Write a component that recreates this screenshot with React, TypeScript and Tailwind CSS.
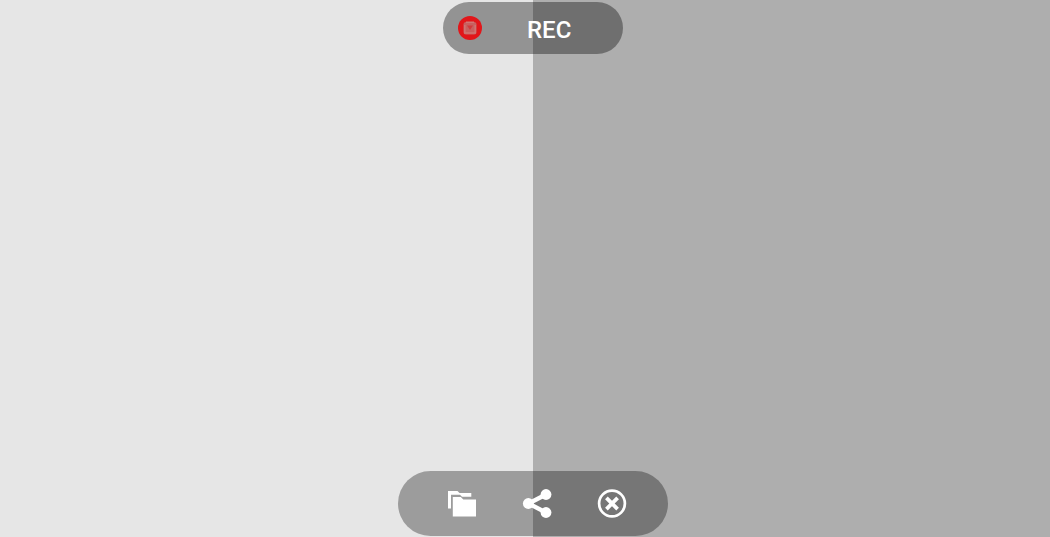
import type { ReactNode } from 'react';

function FoldersIcon() {
  return (
    <svg viewBox="0 0 30 30" className="size-[30px]" fill="currentColor" aria-hidden="true">
      <path d="M1 3h9.5l2 2H24.3v3.8H15l-2-2H4v13.6H1z" />
      <path d="M5.800 9h8l2.500 2.500H29V28.500H5.800z" />
    </svg>
  );
}

function ShareIcon() {
  return (
    <svg viewBox="0 0 30 30" className="size-[30px]" aria-hidden="true">
      <path d="M24 6.500 6.500 15.500 24 24.500" fill="none" stroke="currentColor" strokeWidth="4.300" />
      <g fill="currentColor">
        <circle cx="24" cy="6.500" r="5.400" />
        <circle cx="6.300" cy="15.500" r="5.400" />
        <circle cx="24" cy="24.500" r="5.400" />
      </g>
    </svg>
  );
}

function CloseIcon() {
  return (
    <svg viewBox="0 0 30 30" className="size-[30px]" fill="none" stroke="currentColor" aria-hidden="true">
      <circle cx="15" cy="15.500" r="12.900" strokeWidth="2.700" />
      <path d="m9.400 9.900 11.200 11.200m0-11.200-11.200 11.200" strokeWidth="3.800" />
    </svg>
  );
}

function RecordIcon() {
  return (
    <svg viewBox="0 0 24 24" className="size-6" aria-hidden="true">
      <circle cx="12" cy="12" r="12" fill="#e2161a" />
      <rect x="5.500" y="6" width="13" height="12.500" rx="2.500" fill="#c8605f" />
      <path d="M8 6.200h8M6.800 9v8h10.400V9" fill="none" stroke="#cf7673" strokeWidth="1.500" />
      <path d="M9 9.500h6l-3 4.500z" fill="#d03a3c" />
    </svg>
  );
}

function ToolButton({ label, children }: { label: string; children: ReactNode }) {
  return (
    <button type="button" aria-label={label} className="shrink-0 cursor-pointer">
      {children}
    </button>
  );
}

export default function App() {
  return (
    <main className="relative flex h-screen overflow-hidden font-['Roboto',sans-serif] text-white">
      <div className="w-[50.76%] bg-[#e6e6e6]" />
      <div className="flex-1 bg-[#aeaeae]" />

      <button
        type="button"
        className="absolute top-0.5 left-[50.76%] flex h-[52px] w-[180px] -translate-x-1/2 cursor-pointer items-center gap-[45px] rounded-full bg-black/36 pl-[15px]"
      >
        <RecordIcon />
        <span className="pt-[3px] text-[24px] leading-7 font-medium">REC</span>
      </button>

      <div
        role="toolbar"
        aria-label="Capture actions"
        className="absolute bottom-px left-[50.76%] flex h-[65px] w-[270px] -translate-x-1/2 items-center gap-[45px] rounded-full bg-black/32 pb-0.5 pl-[49px]"
      >
        <ToolButton label="Open folder">
          <FoldersIcon />
        </ToolButton>
        <ToolButton label="Share">
          <ShareIcon />
        </ToolButton>
        <ToolButton label="Close">
          <CloseIcon />
        </ToolButton>
      </div>
    </main>
  );
}
